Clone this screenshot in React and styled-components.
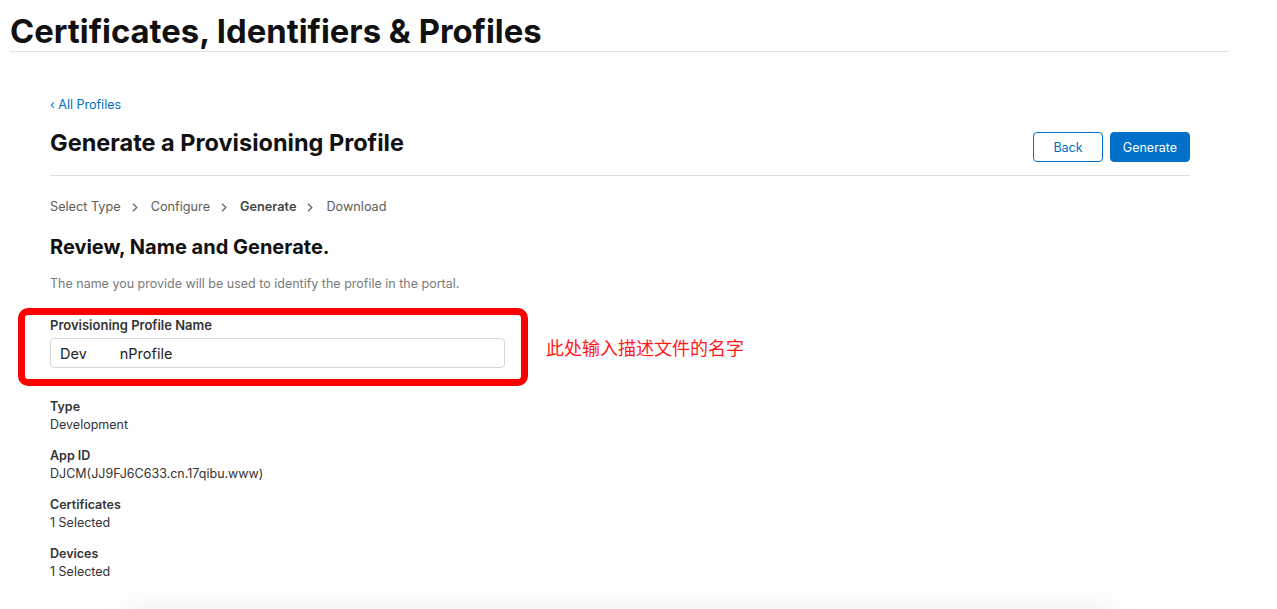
import React from 'react'
import styled, { createGlobalStyle } from 'styled-components'

const GlobalStyle = createGlobalStyle`
    html, body {
        margin: 0;
        padding: 0;
        background: #fff;
        font-family: Inter, "Noto Sans", "Liberation Sans", sans-serif;
        color: #111;
        overflow: hidden;
    }
`

const Page = styled.div`
    width: 1277px;
    height: 609px;
    overflow: hidden;
`

const Header = styled.header`
    width: 1219px;
    margin-left: 10px;
    border-bottom: 1px solid #e2e2e2;
    padding-top: 11px;
    box-sizing: border-box;
    height: 52px;
`

const Title = styled.h1`
    margin: 0;
    font-size: 32.8px;
    line-height: 40px;
    font-weight: 700;
    color: #111;
`

const Main = styled.main`
    width: 1140px;
    margin-left: 50px;
    padding-top: 45px;
`

const BackLink = styled.a`
    display: block;
    font-size: 12.5px;
    line-height: 16px;
    color: #0070c9;
    text-decoration: none;
`

const TitleRow = styled.div`
    display: flex;
    align-items: flex-start;
    justify-content: space-between;
    box-sizing: border-box;
    height: 63px;
    padding-top: 16px;
    border-bottom: 1px solid #dcdcdc;
`

const PageTitle = styled.h2`
    margin: 0;
    font-size: 23.5px;
    line-height: 28px;
    font-weight: 700;
    color: #111;
`

const Actions = styled.div`
    display: flex;
    gap: 7px;
    margin-top: 3px;
`

const Button = styled.button`
    height: 30px;
    padding: 0;
    width: ${props => props.width}px;
    border-radius: 4px;
    font-family: inherit;
    font-size: 12.5px;
    cursor: pointer;
    border: 1px solid #0070c9;
    background: ${props => props.primary ? '#0070c9' : '#fff'};
    color: ${props => props.primary ? '#fff' : '#0070c9'};
`

const Steps = styled.div`
    display: flex;
    align-items: center;
    margin-top: 23px;
    font-size: 12.7px;
    line-height: 16px;
    color: #5c5c5c;
`

const Step = styled.span`
    font-weight: ${props => props.active ? 600 : 400};
    color: ${props => props.active ? '#444' : '#5c5c5c'};
`

const Chevron = styled.svg`
    width: 6px;
    height: 9px;
    margin: 1px 13px 0 11px;
`

const Subtitle = styled.h3`
    margin: 20px 0 0;
    font-size: 20px;
    line-height: 24px;
    font-weight: 700;
    color: #111;
`

const Note = styled.p`
    margin: 17px 0 0;
    font-size: 12.5px;
    line-height: 16px;
    color: #7a7a7a;
`

const FieldRow = styled.div`
    display: flex;
    align-items: center;
    margin-top: 16px;
    margin-left: -32px;
`

const Highlight = styled.div`
    box-sizing: border-box;
    width: 510px;
    height: 78px;
    border: 7px solid #ff0000;
    border-radius: 10px;
    padding: 0 0 0 25px;
`

const FieldLabel = styled.label`
    display: block;
    margin-top: 2px;
    font-size: 13px;
    line-height: 16px;
    font-weight: 600;
    color: #333;
`

const Input = styled.div`
    margin-top: 5px;
    width: 455px;
    height: 30px;
    box-sizing: border-box;
    border: 1px solid #d6d6d6;
    border-radius: 4px;
    padding-left: 9px;
    display: flex;
    align-items: center;
    font-size: 14.5px;
    color: #222;
`

const Masked = styled.span`
    display: inline-block;
    width: 33px;
`

const Annotation = styled.span`
    margin-left: 18px;
    font-family: "Noto Sans CJK SC", sans-serif;
    font-size: 18px;
    color: #ff1a1a;
`

const Details = styled.dl`
    margin: 12px 0 0;
    display: flex;
    flex-direction: column;
    gap: 13px;
`

const Detail = styled.div`
    font-size: 12.5px;
    line-height: 18px;
`

const Term = styled.dt`
    font-weight: 600;
    color: #333;
`

const Value = styled.dd`
    margin: 0;
    color: #333;
`

const Footer = styled.div`
    margin: 28px 0 0 80px;
    width: 980px;
    height: 40px;
    background: #fff;
    box-shadow: 0 0 28px 6px rgba(0, 0, 0, 0.05);
`

const details = [
    { term: 'Type', value: 'Development' },
    { term: 'App ID', value: 'DJCM(JJ9FJ6C633.cn.17qibu.www)' },
    { term: 'Certificates', value: '1 Selected' },
    { term: 'Devices', value: '1 Selected' }
]

const steps = ['Select Type', 'Configure', 'Generate', 'Download']

const App = () => {
    return (
        <Page>
            <GlobalStyle />
            <Header>
                <Title>Certificates, Identifiers &amp; Profiles</Title>
            </Header>
            <Main>
                <BackLink href="#">‹ All Profiles</BackLink>
                <TitleRow>
                    <PageTitle>Generate a Provisioning Profile</PageTitle>
                    <Actions>
                        <Button width={70}>Back</Button>
                        <Button primary width={80}>Generate</Button>
                    </Actions>
                </TitleRow>
                <Steps>
                    {steps.map((step, i) => (
                        <React.Fragment key={step}>
                            {i > 0 && (
                                <Chevron viewBox="0 0 6 9">
                                    <path d="M1 0.8 L4.8 4.5 L1 8.2" fill="none" stroke="#666" strokeWidth="1.3" />
                                </Chevron>
                            )}
                            <Step active={step === 'Generate'}>{step}</Step>
                        </React.Fragment>
                    ))}
                </Steps>
                <Subtitle>Review, Name and Generate.</Subtitle>
                <Note>The name you provide will be used to identify the profile in the portal.</Note>
                <FieldRow>
                    <Highlight>
                        <FieldLabel>Provisioning Profile Name</FieldLabel>
                        <Input>Dev<Masked />nProfile</Input>
                    </Highlight>
                    <Annotation>此处输入描述文件的名字</Annotation>
                </FieldRow>
                <Details>
                    {details.map(d => (
                        <Detail key={d.term}>
                            <Term>{d.term}</Term>
                            <Value>{d.value}</Value>
                        </Detail>
                    ))}
                </Details>
                <Footer />
            </Main>
        </Page>
    )
}

export default App
